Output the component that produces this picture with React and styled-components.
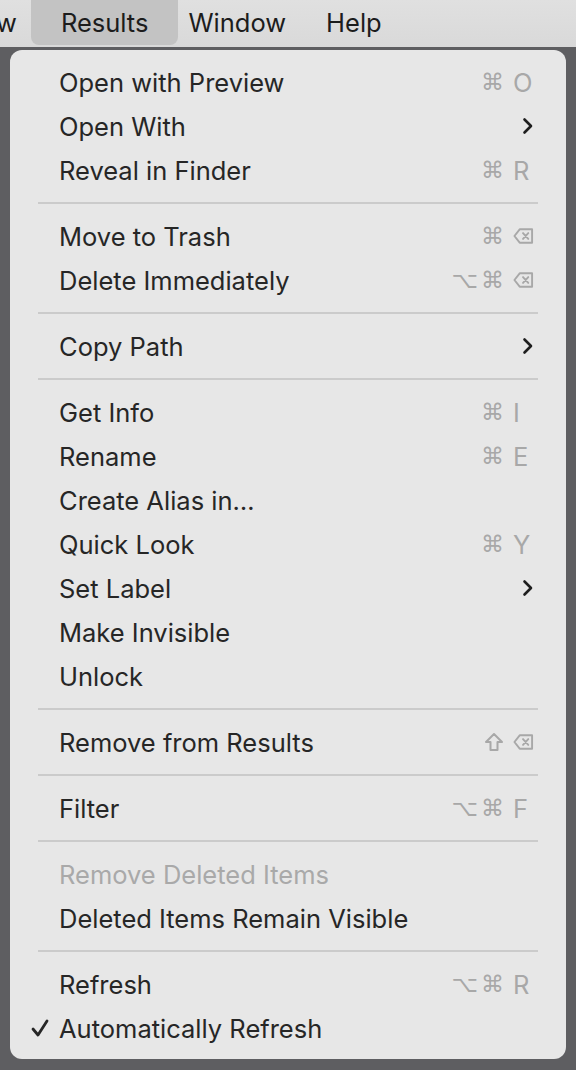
import React from "react";
import styled, { createGlobalStyle } from "styled-components";

const Global = createGlobalStyle`
  html, body { margin: 0; padding: 0; background: #5e5e61; }
  body { font-family: Inter, "Noto Sans", sans-serif; -webkit-font-smoothing: antialiased; }
`;

const Page = styled.div`
  width: 576px;
  height: 1070px;
  background: #5e5e61;
  overflow: hidden;
  display: flex;
  flex-direction: column;
`;

const MenuBar = styled.div`
  height: 47px;
  background: linear-gradient(#e0e0e0, #d9d9d9);
  display: flex;
  align-items: flex-start;
  flex-shrink: 0;
`;

const BarItem = styled.div`
  display: flex;
  align-items: center;
  flex-shrink: 0;
  white-space: nowrap;
  padding: 0 ${(p) => p.$pad ?? 0}px;
  margin-left: ${(p) => p.$ml ?? 0}px;
  font-size: 25.5px;
  color: #1c1c1c;
  background: ${(p) => (p.$active ? "#c3c3c3" : "transparent")};
  border-radius: 0 0 8px 8px;
  height: 45px;
`;

const Panel = styled.div`
  margin: 3px 10px 0 10px;
  background: #e7e7e7;
  border-radius: 12px;
  padding: 10px 0 9px;
  display: flex;
  flex-direction: column;
`;

const Row = styled.div`
  height: 44px;
  display: flex;
  align-items: center;
  padding: 0 32px 0 20px;
  font-size: 25.5px;
  color: ${(p) => (p.$disabled ? "#a9a9a9" : "#262626")};
`;

const Check = styled.span`
  width: 29px;
  flex-shrink: 0;
  display: flex;
  align-items: center;
`;

const Label = styled.span`
  flex: 1;
  white-space: nowrap;
`;

const Shortcut = styled.span`
  display: flex;
  align-items: center;
  color: #a8a8a8;
`;

const Mods = styled.span`
  display: flex;
  align-items: center;
  gap: 3px;
  font-family: "DejaVu Sans", sans-serif;
  font-size: 23px;
`;

const Key = styled.span`
  width: 21px;
  margin-left: 9px;
  display: flex;
  align-items: center;
  font-size: 25.5px;
`;

const Sep = styled.div`
  height: 22px;
  display: flex;
  align-items: center;
  padding: 0 28px;
  &::after {
    content: "";
    flex: 1;
    height: 2px;
    background: #cbcbcb;
  }
`;

const Del = () => (
  <svg width="22" height="18" viewBox="0 0 22 18" fill="none" stroke="#a8a8a8" strokeWidth="2" strokeLinejoin="round">
    <path d="M7 2 H20 V16 H7 L1.5 9 Z" />
    <path d="M10.5 6 L16 12 M16 6 L10.5 12" strokeLinecap="round" />
  </svg>
);

const Shift = () => (
  <svg width="20" height="20" viewBox="0 0 20 20" fill="none" stroke="#a8a8a8" strokeWidth="2" strokeLinejoin="round">
    <path d="M10 2 L18 10 H13.5 V18 H6.5 V10 H2 Z" />
  </svg>
);

const Chevron = () => (
  <svg width="12" height="18" viewBox="0 0 12 18" fill="none" stroke="#1e1e1e" strokeWidth="2.6" strokeLinecap="round" strokeLinejoin="round">
    <path d="M2.5 2.5 L9 9 L2.5 15.5" />
  </svg>
);

const CheckMark = () => (
  <svg width="20" height="20" viewBox="0 0 20 20" fill="none" stroke="#262626" strokeWidth="2.8" strokeLinecap="round" strokeLinejoin="round">
    <path d="M3 11 L8 17 L17 3" />
  </svg>
);

const keyIcon = (k) => (k === "del" ? <Del /> : k);

const renderShortcut = (s) => {
  if (!s) return null;
  if (s === "sub") return <Chevron />;
  return (
    <Shortcut>
      <Mods>
        {s.mods.map((m, i) => (m === "shift" ? <Shift key={i} /> : <span key={i}>{m}</span>))}
      </Mods>
      <Key>{keyIcon(s.key)}</Key>
    </Shortcut>
  );
};

const groups = [
  [
    ["Open with Preview", { mods: ["⌘"], key: "O" }],
    ["Open With", "sub"],
    ["Reveal in Finder", { mods: ["⌘"], key: "R" }],
  ],
  [
    ["Move to Trash", { mods: ["⌘"], key: "del" }],
    ["Delete Immediately", { mods: ["⌥", "⌘"], key: "del" }],
  ],
  [["Copy Path", "sub"]],
  [
    ["Get Info", { mods: ["⌘"], key: "I" }],
    ["Rename", { mods: ["⌘"], key: "E" }],
    ["Create Alias in…"],
    ["Quick Look", { mods: ["⌘"], key: "Y" }],
    ["Set Label", "sub"],
    ["Make Invisible"],
    ["Unlock"],
  ],
  [["Remove from Results", { mods: ["shift"], key: "del" }]],
  [["Filter", { mods: ["⌥", "⌘"], key: "F" }]],
  [
    ["Remove Deleted Items", null, { disabled: true }],
    ["Deleted Items Remain Visible"],
  ],
  [
    ["Refresh", { mods: ["⌥", "⌘"], key: "R" }],
    ["Automatically Refresh", null, { checked: true }],
  ],
];

export default function App() {
  return (
    <Page>
      <Global />
      <MenuBar>
        <BarItem $ml={-4}>w</BarItem>
        <BarItem $ml={14} $pad={30} $active>Results</BarItem>
        <BarItem $ml={10}>Window</BarItem>
        <BarItem $ml={40}>Help</BarItem>
      </MenuBar>
      <Panel>
        {groups.map((g, gi) => (
          <React.Fragment key={gi}>
            {gi > 0 && <Sep />}
            {g.map(([label, sc, opt = {}]) => (
              <Row key={label} $disabled={opt.disabled}>
                <Check>{opt.checked && <CheckMark />}</Check>
                <Label>{label}</Label>
                {renderShortcut(sc)}
              </Row>
            ))}
          </React.Fragment>
        ))}
      </Panel>
    </Page>
  );
}
